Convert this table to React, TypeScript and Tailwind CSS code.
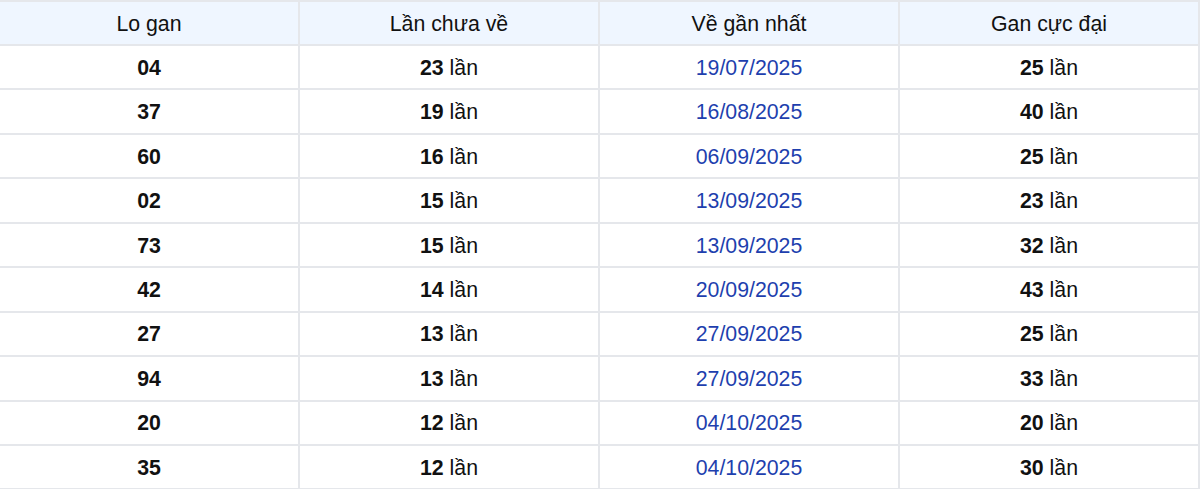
import React from 'react';

interface GanRow {
  lo: string;
  current: number;
  lastDate: string;
  max: number;
}

const rows: GanRow[] = [
  { lo: '04', current: 23, lastDate: '19/07/2025', max: 25 },
  { lo: '37', current: 19, lastDate: '16/08/2025', max: 40 },
  { lo: '60', current: 16, lastDate: '06/09/2025', max: 25 },
  { lo: '02', current: 15, lastDate: '13/09/2025', max: 23 },
  { lo: '73', current: 15, lastDate: '13/09/2025', max: 32 },
  { lo: '42', current: 14, lastDate: '20/09/2025', max: 43 },
  { lo: '27', current: 13, lastDate: '27/09/2025', max: 25 },
  { lo: '94', current: 13, lastDate: '27/09/2025', max: 33 },
  { lo: '20', current: 12, lastDate: '04/10/2025', max: 20 },
  { lo: '35', current: 12, lastDate: '04/10/2025', max: 30 },
];

const headers = ['Lo gan', 'Lần chưa về', 'Về gần nhất', 'Gan cực đại'];

const Count: React.FC<{ value: number }> = ({ value }) => (
  <>
    <b className="font-bold">{value}</b> lần
  </>
);

export default function App() {
  return (
    <div className="h-[489px] w-[1200px] overflow-hidden bg-white font-['Liberation_Sans',Arial,sans-serif] text-[21.3px] text-[#111]">
      <table className="-ml-[2px] w-[1202px] table-fixed border-collapse">
        <thead>
          <tr className="bg-[#eff6ff]">
            {headers.map((h) => (
              <th
                key={h}
                className="h-[44px] border-2 border-[#e5e7eb] px-0 pt-[3px] pb-0 text-center font-normal"
              >
                {h}
              </th>
            ))}
          </tr>
        </thead>
        <tbody>
          {rows.map((r) => (
            <tr key={r.lo}>
              <td className="h-[44.44px] border-2 border-[#e5e7eb] px-0 pt-[3px] pb-0 text-center font-bold">
                {r.lo}
              </td>
              <td className="border-2 border-[#e5e7eb] px-0 pt-[3px] pb-0 text-center">
                <Count value={r.current} />
              </td>
              <td className="border-2 border-[#e5e7eb] px-0 pt-[3px] pb-0 text-center text-[#1e3fae]">
                {r.lastDate}
              </td>
              <td className="border-2 border-[#e5e7eb] px-0 pt-[3px] pb-0 text-center">
                <Count value={r.max} />
              </td>
            </tr>
          ))}
        </tbody>
      </table>
    </div>
  );
}
